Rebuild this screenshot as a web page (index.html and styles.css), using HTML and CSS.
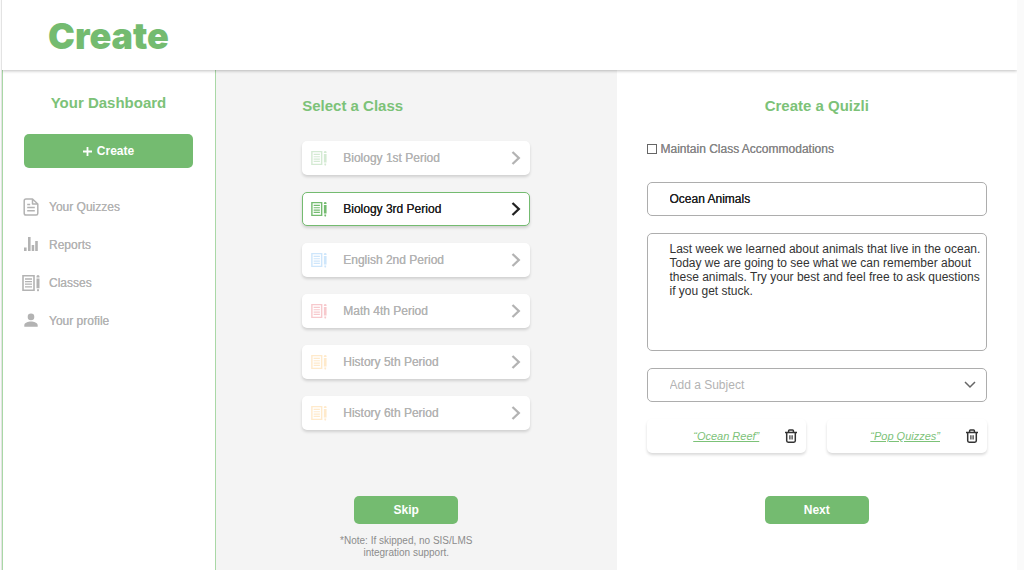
FILE: index.html
```html
<!DOCTYPE html>
<html lang="en">
<head>
    <meta charset="UTF-8">
    <meta name="viewport" content="width=device-width, initial-scale=1.0">
    <title>Quizli - Create</title>
    <link rel="stylesheet" href="styles.css">
</head>
<body>
    <!-- Shared icons -->
    <svg class="sprite" aria-hidden="true">
        <symbol id="notebook" viewBox="0 0 18 18">
            <path fill="none" stroke="currentColor" stroke-width="1.6" d="M1 1.800h11v14.400H1z"/>
            <path stroke="currentColor" stroke-width="1.300" d="M3 5h7M3 7.600h7M3 10.200h7M3 12.800h7"/>
            <path fill="currentColor" d="M14.500 2.600a1.500 1.500 0 0 1 3 0v.8h-3zM14.500 4.600h3v9.600h-3zM15 15.200h2v1.600l-1 .8-1-.8z"/>
        </symbol>
        <symbol id="chevron" viewBox="0 0 10 16">
            <path fill="none" stroke="currentColor" stroke-width="2.300" d="M1.500 2l6.300 6-6.300 6"/>
        </symbol>
        <symbol id="trash" viewBox="0 0 14 14">
            <path fill="none" stroke="currentColor" stroke-width="1.500" stroke-linejoin="round" d="M1 3.400h12M4.600 3.200V1.800q0-.8.8-.8h3.200q.8 0 .8.8v1.400M2.700 3.600v8.200q0 1.400 1.400 1.400h5.800q1.400 0 1.400-1.400V3.600"/>
            <path stroke="currentColor" stroke-width="1.200" d="M5.900 6.200v4.400M8.100 6.200v4.400"/>
        </symbol>
    </svg>

    <div class="app">
        <header class="header">
            <h1>Create</h1>
        </header>

        <div class="columns">
            <aside class="sidebar">
                <h2>Your Dashboard</h2>
                <button type="button" class="btn btn-create">
                    <svg width="9" height="9" viewBox="0 0 9 9"><path stroke="currentColor" stroke-width="1.800" d="M4.500 0v9M0 4.500h9"/></svg>
                    Create
                </button>
                <nav class="menu">
                    <a href="#">
                        <svg width="18" height="18" viewBox="0 0 18 18"><path fill="none" stroke="currentColor" stroke-width="1.500" stroke-linejoin="round" d="M10.500 1H4Q2.200 1 2.200 2.800v12.400Q2.200 17 4 17h10.200q1.600 0 1.600-1.800V6zM10.500 1v5h5.300M5.200 6.500h3M5.200 9.600h7.600M5.200 12.800h7.600"/></svg>
                        Your Quizzes
                    </a>
                    <a href="#">
                        <svg width="18" height="18" viewBox="0 0 18 18"><path fill="currentColor" d="M2 11.500h2.600V15H2zM6 1h2.600v14H6zM9.700 9h2.500v6H9.700zM13.200 5h2.600v10h-2.600z"/></svg>
                        Reports
                    </a>
                    <a href="#">
                        <svg width="18" height="18"><use href="#notebook"/></svg>
                        Classes
                    </a>
                    <a href="#">
                        <svg width="18" height="18" viewBox="0 0 18 18"><path fill="currentColor" d="M9 1.600a3.300 3.300 0 1 1 0 6.600a3.300 3.300 0 0 1 0-6.600zM2.300 14.800v-1.600c0-2.400 3.900-3.700 6.700-3.700s6.700 1.300 6.700 3.700v1.600z"/></svg>
                        Your profile
                    </a>
                </nav>
            </aside>

            <section class="classes">
                <div class="class-list">
                    <h2>Select a Class</h2>
                    <button type="button" class="class-card green"><svg class="book"><use href="#notebook"/></svg>Biology 1st Period<svg class="arrow"><use href="#chevron"/></svg></button>
                    <button type="button" class="class-card green selected"><svg class="book"><use href="#notebook"/></svg>Biology 3rd Period<svg class="arrow"><use href="#chevron"/></svg></button>
                    <button type="button" class="class-card blue"><svg class="book"><use href="#notebook"/></svg>English 2nd Period<svg class="arrow"><use href="#chevron"/></svg></button>
                    <button type="button" class="class-card red"><svg class="book"><use href="#notebook"/></svg>Math 4th Period<svg class="arrow"><use href="#chevron"/></svg></button>
                    <button type="button" class="class-card orange"><svg class="book"><use href="#notebook"/></svg>History 5th Period<svg class="arrow"><use href="#chevron"/></svg></button>
                    <button type="button" class="class-card orange"><svg class="book"><use href="#notebook"/></svg>History 6th Period<svg class="arrow"><use href="#chevron"/></svg></button>
                </div>
                <div class="skip">
                    <button type="button" class="btn btn-step">Skip</button>
                    <p class="note">*Note: If skipped, no SIS/LMS<br>integration support.</p>
                </div>
            </section>

            <form class="quiz">
                <h2>Create a Quizli</h2>
                <label class="check"><input type="checkbox" name="accommodations">Maintain Class Accommodations</label>
                <input type="text" class="field title" name="title" aria-label="Quiz title" value="Ocean Animals">
                <textarea class="field description" name="description" aria-label="Description">Last week we learned about animals that live in the ocean. Today we are going to see what we can remember about these animals. Try your best and feel free to ask questions if you get stuck.</textarea>
                <select class="field subject" name="subject" aria-label="Subject">
                    <option>Add a Subject</option>
                </select>
                <div class="tags">
                    <div class="tag">
                        <a href="#">“Ocean Reef”</a>
                        <button type="button" aria-label="Delete Ocean Reef"><svg width="14" height="14"><use href="#trash"/></svg></button>
                    </div>
                    <div class="tag">
                        <a href="#">“Pop Quizzes”</a>
                        <button type="button" aria-label="Delete Pop Quizzes"><svg width="14" height="14"><use href="#trash"/></svg></button>
                    </div>
                </div>
                <button type="button" class="btn btn-step">Next</button>
            </form>
        </div>
    </div>
</body>
</html>
```
FILE: styles.css
```css
* {
    box-sizing: border-box;
}
body {
    margin: 0;
    background-color: #fafafa;
    font-family: "Liberation Sans", Arial, sans-serif;
    font-size: 12px;
    color: #b3b3b3;
}
button, input, textarea, select {
    font: inherit;
    color: inherit;
}
.sprite {
    display: none;
}
.app {
    display: flex;
    flex-direction: column;
    min-height: 100vh;
    margin: 0 7px 0 1px;
    border-left: 1px solid #e3e3e3;
    background-color: #fff;
}

/* Header */
.header {
    display: flex;
    align-items: center;
    height: 70px;
    padding: 2px 46px 0;
    background-color: #fff;
    box-shadow: 0 1px 3px rgba(0, 0, 0, 0.25);
    clip-path: inset(0 0 -6px 0);
    z-index: 1;
}
h1 {
    margin: 0;
    font-family: Inter, sans-serif;
    font-size: 36px;
    font-weight: 900;
    color: #74bb70;
}
h2 {
    margin: 0;
    font-size: 15px;
    line-height: 20px;
    color: #7cc278;
}
.columns {
    display: grid;
    flex: 1;
    grid-template-columns: 214px 1fr 1fr;
}
.btn {
    border: none;
    border-radius: 5px;
    background-color: #74bb70;
    color: #fff;
    font-weight: bold;
    cursor: pointer;
}

/* Sidebar */
.sidebar {
    display: flex;
    flex-direction: column;
    padding: 23px 22px 0 21px;
    border: 1px solid #a9d8a6;
    border-width: 0 1px;
}
.sidebar h2 {
    text-align: center;
}
.btn-create {
    display: flex;
    align-items: center;
    justify-content: center;
    gap: 5px;
    height: 34px;
    margin-top: 21px;
}
.menu {
    display: flex;
    flex-direction: column;
    gap: 20px;
    margin: 30px 0 0 -2px;
}
.menu a {
    display: flex;
    align-items: center;
    gap: 9px;
    line-height: 18px;
    color: #b3b3b3;
    text-decoration: none;
    text-shadow: 0 0 0 currentColor;
}

/* Class list */
.classes {
    display: flex;
    flex-direction: column;
    align-items: center;
    padding-top: 26px;
    background-color: #f4f4f4;
}
.class-list {
    display: flex;
    flex-direction: column;
    gap: 17px;
    width: 228px;
}
.class-list h2 {
    margin-bottom: 8px;
}
.class-card {
    display: flex;
    align-items: center;
    height: 34px;
    padding: 0 8px;
    border: 1px solid transparent;
    border-radius: 5px;
    background-color: #fff;
    box-shadow: 0 2px 3px rgba(0, 0, 0, 0.15);
    text-shadow: 0 0 0 currentColor;
    cursor: pointer;
}
.book {
    width: 16px;
    height: 16px;
    margin-right: 16px;
    opacity: 0.3;
}
.arrow {
    width: 10px;
    height: 16px;
    margin-left: auto;
}
.green .book {
    color: #74bb70;
}
.blue .book {
    color: #60b0f4;
}
.red .book {
    color: #e8505b;
}
.orange .book {
    color: #ffbb55;
}
.class-card.selected {
    border-color: #74bb70;
    color: #222;
}
.selected .book {
    opacity: 1;
}
.btn-step {
    width: 104px;
    height: 28px;
}
.skip {
    margin-top: 66px;
    padding-right: 20px;
    text-align: center;
}
.note {
    margin: 11px 0 0;
    font-size: 10px;
    line-height: 12px;
    color: #8c8c8c;
}

/* Quiz form */
.quiz {
    display: flex;
    flex-direction: column;
    padding: 26px 30px 0;
}
.quiz h2 {
    text-align: center;
}
.check {
    display: flex;
    align-items: center;
    gap: 4px;
    margin-top: 23px;
    line-height: 20px;
    color: #868686;
    text-shadow: 0 0 0 currentColor;
}
.check input {
    appearance: none;
    width: 10px;
    height: 10px;
    margin: 0;
    border: 1px solid #666;
}
.check input:checked {
    background-color: #74bb70;
}
.field {
    width: 100%;
    height: 34px;
    margin-top: 17px;
    padding: 0 22px;
    border: 1px solid #adadad;
    border-radius: 5px;
    background-color: #fff;
}
.title {
    margin-top: 23px;
    color: #222;
    text-shadow: 0 0 0 currentColor;
}
.description {
    height: 118px;
    padding: 8px 4px 8px 22px;
    line-height: 14px;
    color: #333;
    resize: none;
}
.subject {
    appearance: none;
    background-image: url("data:image/svg+xml,%3Csvg xmlns='http://www.w3.org/2000/svg' width='12' height='8'%3E%3Cpath d='M1 1l5 5 5-5' fill='none' stroke='%23666' stroke-width='1.5'/%3E%3C/svg%3E");
    background-repeat: no-repeat;
    background-position: right 10px center;
}
.tags {
    display: flex;
    gap: 21px;
    margin-top: 17px;
}
.tag {
    display: flex;
    flex: 1;
    align-items: center;
    justify-content: flex-end;
    gap: 25px;
    height: 34px;
    padding-right: 8px;
    border-radius: 5px;
    box-shadow: 0 2px 3px rgba(0, 0, 0, 0.15);
}
.tag a {
    font-size: 11px;
    font-style: italic;
    color: #7cc278;
}
.tag button {
    display: flex;
    padding: 0;
    border: none;
    background: none;
    color: #333;
    cursor: pointer;
}
.quiz .btn-step {
    align-self: center;
    margin-top: 43px;
}
```
